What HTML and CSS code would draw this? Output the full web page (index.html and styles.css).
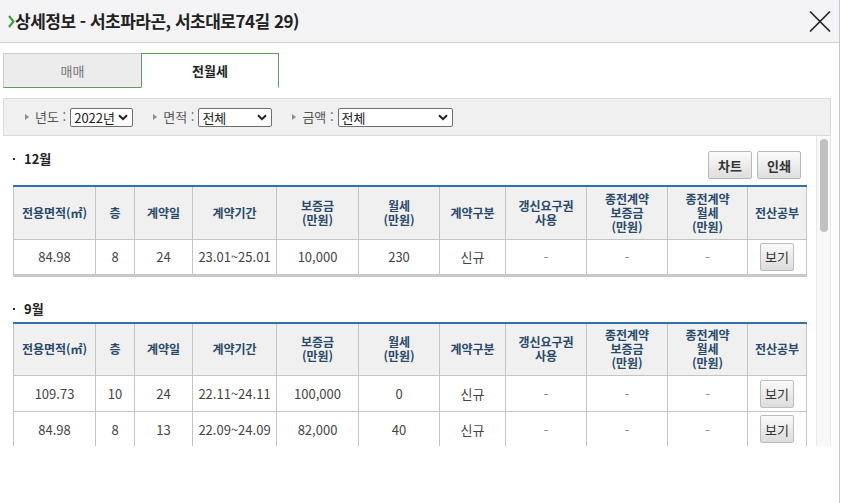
FILE: index.html
```html
<!DOCTYPE html>
<html lang="ko">
<head>
<meta charset="utf-8">
<title>상세정보</title>
<link rel="stylesheet" href="styles.css">
</head>
<body>
<div class="popup">
  <header class="hd">
    <h1 class="title"><svg class="title-chev" width="7" height="13" viewBox="0 0 7 13"><polyline points="1,1 5.5,6.5 1,12" fill="none" stroke="#2f9a3a" stroke-width="2"/></svg><span>상세정보 - 서초파라곤, 서초대로74길 29)</span></h1>
    <button class="close" aria-label="닫기"><svg width="22" height="21" viewBox="0 0 22 21"><line x1="1" y1="0.5" x2="21" y2="20.5" stroke="#222" stroke-width="1.6"/><line x1="21" y1="0.5" x2="1" y2="20.5" stroke="#222" stroke-width="1.6"/></svg></button>
  </header>
  <div class="body">
    <div class="tabs">
      <div class="tab">매매</div>
      <div class="tab active">전월세</div>
    </div>
    <div class="filters">
      <div class="filter">
        <i class="tri"></i><span class="flabel">년도 :</span>
        <span class="sel sel-year">2022년<svg class="dd" width="10" height="7" viewBox="0 0 10 7"><polyline points="1,1.2 5,5.2 9,1.2" fill="none" stroke="#222" stroke-width="2"/></svg></span>
      </div>
      <div class="filter">
        <i class="tri"></i><span class="flabel">면적 :</span>
        <span class="sel sel-area">전체<svg class="dd" width="10" height="7" viewBox="0 0 10 7"><polyline points="1,1.2 5,5.2 9,1.2" fill="none" stroke="#222" stroke-width="2"/></svg></span>
      </div>
      <div class="filter">
        <i class="tri"></i><span class="flabel">금액 :</span>
        <span class="sel sel-price">전체<svg class="dd" width="10" height="7" viewBox="0 0 10 7"><polyline points="1,1.2 5,5.2 9,1.2" fill="none" stroke="#222" stroke-width="2"/></svg></span>
      </div>
    </div>
    <div class="scroll">
      <div class="scroll-content">
        <section class="month month-first">
          <div class="month-head">
            <h2 class="month-title">12월</h2>
            <div class="actions">
              <button class="btn">차트</button>
              <button class="btn">인쇄</button>
            </div>
          </div>
          <table class="grid">
            <colgroup>
              <col style="width:82px"><col style="width:39px"><col style="width:58px"><col style="width:84px"><col style="width:82px"><col style="width:81px"><col style="width:66px"><col style="width:81px"><col style="width:81px"><col style="width:80px"><col style="width:59px">
            </colgroup>
            <thead>
              <tr>
                <th>전용면적(㎡)</th><th>층</th><th>계약일</th><th>계약기간</th><th>보증금<br>(만원)</th><th>월세<br>(만원)</th><th>계약구분</th><th>갱신요구권<br>사용</th><th>종전계약<br>보증금<br>(만원)</th><th>종전계약<br>월세<br>(만원)</th><th>전산공부</th>
              </tr>
            </thead>
            <tbody>
              <tr>
                <td>84.98</td><td>8</td><td>24</td><td>23.01~25.01</td><td>10,000</td><td>230</td><td>신규</td><td class="dash">-</td><td class="dash">-</td><td class="dash">-</td><td><button class="view">보기</button></td>
              </tr>
            </tbody>
          </table>
        </section>
        <section class="month month-next">
          <div class="month-head">
            <h2 class="month-title">9월</h2>
          </div>
          <table class="grid">
            <colgroup>
              <col style="width:82px"><col style="width:39px"><col style="width:58px"><col style="width:84px"><col style="width:82px"><col style="width:81px"><col style="width:66px"><col style="width:81px"><col style="width:81px"><col style="width:80px"><col style="width:59px">
            </colgroup>
            <thead>
              <tr>
                <th>전용면적(㎡)</th><th>층</th><th>계약일</th><th>계약기간</th><th>보증금<br>(만원)</th><th>월세<br>(만원)</th><th>계약구분</th><th>갱신요구권<br>사용</th><th>종전계약<br>보증금<br>(만원)</th><th>종전계약<br>월세<br>(만원)</th><th>전산공부</th>
              </tr>
            </thead>
            <tbody>
              <tr>
                <td>109.73</td><td>10</td><td>24</td><td>22.11~24.11</td><td>100,000</td><td>0</td><td>신규</td><td class="dash">-</td><td class="dash">-</td><td class="dash">-</td><td><button class="view">보기</button></td>
              </tr>
              <tr>
                <td>84.98</td><td>8</td><td>13</td><td>22.09~24.09</td><td>82,000</td><td>40</td><td>신규</td><td class="dash">-</td><td class="dash">-</td><td class="dash">-</td><td><button class="view">보기</button></td>
              </tr>
            </tbody>
          </table>
        </section>
      </div>
      <div class="scrollbar"><div class="thumb"></div></div>
    </div>
  </div>
</div>
</body>
</html>
```

FILE: styles.css
```css
* { box-sizing: border-box; }
html, body { margin: 0; padding: 0; background: #fff; }
body {
  font-family: "Noto Sans CJK KR", "Noto Sans", "Liberation Sans", sans-serif;
  color: #333;
}
button { font-family: inherit; }

.popup {
  width: 840px;
  height: 503px;
  border-right: 1px solid #c8c8c8;
  overflow: hidden;
}

/* header */
.hd {
  height: 43px;
  background: #f4f4f6;
  border-bottom: 1px solid #cfcfcf;
  display: flex;
  align-items: center;
  justify-content: space-between;
  padding: 0 8px 0 8px;
}
.title {
  margin: 0;
  display: flex;
  align-items: center;
  font-size: 17px;
  font-weight: 700;
  color: #222;
  letter-spacing: -0.5px;
  line-height: 20px;
}
.title-chev { display: block; }
.close {
  border: 0;
  background: transparent;
  padding: 0;
  width: 22px;
  height: 21px;
  margin-top: 1px;
  display: block;
}
.close svg { display: block; }

.body { padding: 10px 8px 0 3px; }

/* tabs */
.tabs { display: flex; height: 35px; }
.tab {
  width: 138px;
  height: 35px;
  display: flex;
  align-items: center;
  justify-content: center;
  font-size: 13px;
  color: #777;
  background: #ececec;
  border: 1px solid #cccccc;
  border-right: 0;
  border-bottom: 1px solid #5d9e5d;
}
.tab.active {
  background: #fff;
  color: #222;
  font-weight: 700;
  border: 1px solid #5d9e5d;
  border-bottom: 1px solid #fff;
}

/* filters */
.filters {
  margin-top: 10px;
  height: 38px;
  background: #f0f0f0;
  border: 1px solid #dadada;
  display: flex;
  align-items: center;
  padding-left: 21px;
  gap: 20px;
}
.filter { display: flex; align-items: center; }
.tri {
  display: block;
  width: 0; height: 0;
  border-left: 4px solid #8a8a8a;
  border-top: 3.5px solid transparent;
  border-bottom: 3.5px solid transparent;
  margin-right: 6px;
}
.flabel {
  font-size: 13px;
  color: #555;
  margin-right: 4px;
  line-height: 18px;
}
.sel {
  height: 19px;
  background: #fff;
  border: 1px solid #6f6f6f;
  border-radius: 2px;
  font-size: 13px;
  color: #222;
  display: flex;
  align-items: center;
  justify-content: space-between;
  padding: 0 4px 0 3px;
  line-height: 17px;
}
.sel-year { width: 63px; }
.sel-area { width: 74px; }
.sel-price { width: 115px; }
.dd { display: block; }

/* scroll area */
.scroll {
  display: flex;
  height: 310px;
}
.scroll-content {
  flex: 1;
  overflow: hidden;
  padding-left: 10px;
}
.scrollbar {
  width: 15px;
  background: #f8f8f8;
  border-left: 1px solid #e8e8e8;
  border-right: 1px solid #e8e8e8;
  padding: 3px 2px 0 3px;
}
.thumb {
  width: 8px;
  height: 93px;
  background: #c1c1c1;
  border-radius: 4px;
}

/* month sections */
.month-head {
  display: flex;
  justify-content: space-between;
  align-items: flex-start;
  width: 793px;
  padding-right: 5px;
}
.month-first { padding-top: 13px; }
.month-first .month-head { height: 30px; margin-bottom: 6px; }
.month-next { margin-top: 22px; }
.month-next .month-head { height: 20px; margin-bottom: 3px; }
.month-title {
  margin: 0;
  font-size: 13px;
  font-weight: 700;
  color: #222;
  line-height: 20px;
  display: flex;
  align-items: center;
}
.month-title::before {
  content: "";
  width: 2px;
  height: 2px;
  background: #333;
  margin-right: 9px;
}
.actions { display: flex; gap: 5px; margin-top: 2px; }
.btn {
  width: 44px;
  height: 28px;
  padding: 0;
  border: 1px solid #b9b9b9;
  border-radius: 2px;
  background: linear-gradient(#fbfbfb, #dedede);
  font-size: 13px;
  font-weight: 700;
  color: #333;
}

/* table */
.grid {
  width: 793px;
  table-layout: fixed;
  border-collapse: collapse;
  border-top: 2px solid #3371a6;
  border-bottom: 3px solid #c8c8c8;
}
.grid th, .grid td {
  border: 1px solid #c4c4c4;
  text-align: center;
  padding: 0;
}
.grid th {
  background: #f0f0f0;
  color: #29496b;
  font-size: 12px;
  font-weight: 700;
  line-height: 14px;
  height: 53px;
}
.grid td {
  font-size: 13px;
  color: #444;
  height: 36px;
}
.grid td.dash { color: #888; }
.view {
  width: 34px;
  height: 28px;
  padding: 0;
  border: 1px solid #bdbdbd;
  border-radius: 2px;
  background: linear-gradient(#fafafa, #dcdcdc);
  font-size: 13px;
  color: #333;
  display: block;
  margin: 0 auto;
}
```
